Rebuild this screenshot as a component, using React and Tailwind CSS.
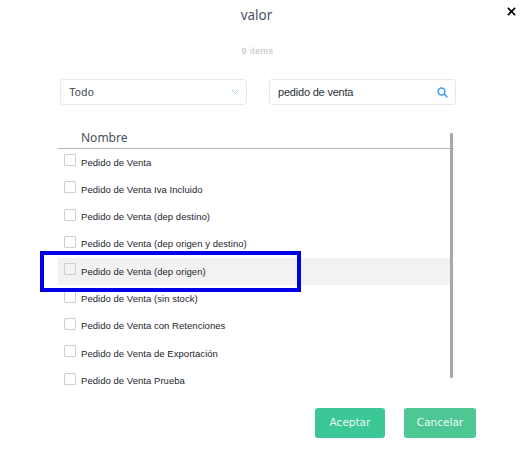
import React from "react";

const rows = [
  "Pedido de Venta",
  "Pedido de Venta Iva Incluido",
  "Pedido de Venta (dep destino)",
  "Pedido de Venta (dep origen y destino)",
  "Pedido de Venta (dep origen)",
  "Pedido de Venta (sin stock)",
  "Pedido de Venta con Retenciones",
  "Pedido de Venta de Exportación",
  "Pedido de Venta Prueba",
];

export default function App() {
  return (
    <div className="relative w-[525px] h-[456px] bg-white overflow-hidden font-['Open_Sans',sans-serif]">
      <button className="absolute right-[8px] top-[5px] w-[12px] h-[12px] flex items-center justify-center text-black">
        <svg width="9" height="9" viewBox="0 0 10 10" fill="none" stroke="currentColor" strokeWidth="1.8">
          <path d="M1 1l8 8M9 1l-8 8" />
        </svg>
      </button>

      <div className="flex flex-col">
        <h1 className="pr-[12px] pt-[6px] h-[31px] text-center text-[13.5px] leading-[18px] text-[#4a5568] font-['Noto_Sans',sans-serif]">valor</h1>
        <p className="pr-[10px] mt-[14px] h-[12px] text-center text-[9px] leading-[12px] text-[#bdbdbd] font-['Liberation_Sans',sans-serif] tracking-[0.4px]">9 items</p>

        <div className="mt-[22px] pl-[60px] flex gap-[22px]">
          <div className="w-[187px] h-[26px] rounded-[3px] border border-[#e6e9ee] pl-[8px] pr-[6px] flex items-center justify-between">
            <span className="text-[11px] text-[#3f4450] font-['Liberation_Sans',sans-serif] tracking-[0.3px]">Todo</span>
            <svg width="9" height="6" viewBox="0 0 9 6" fill="none" stroke="#a9d0f2" strokeWidth="1"><path d="M1 1l3.5 3.5L8 1" /></svg>
          </div>
          <div className="w-[187px] h-[26px] rounded-[3px] border border-[#e6e9ee] pl-[8px] pr-[7px] flex items-center justify-between">
            <span className="text-[11px] text-[#2b2f38] font-['Liberation_Sans',sans-serif] tracking-[-0.2px]">pedido de venta</span>
            <svg width="11" height="11" viewBox="0 0 11 11" fill="none" stroke="#3b9cf0" strokeWidth="1.5"><circle cx="4.5" cy="4.5" r="3.4" /><path d="M7 7l3.3 3.3" /></svg>
          </div>
        </div>

        <div className="relative mt-[24px] ml-[58px] w-[396px]">
          <div className="h-[20px] pl-[23px] border-b border-[#b5b5b5] text-[12px] leading-[18px] text-[#4a4f5a] font-['Noto_Sans',sans-serif]">Nombre</div>
          <ul>
            {rows.map((r, i) => (
              <li key={r} className={`h-[27.3px] w-[392px] flex items-center pl-[6px] gap-[5px] ${i === 4 ? "bg-[#f2f2f2]" : ""}`}>
                <span className={`w-[12px] h-[12px] -mt-[5px] shrink-0 border border-[#cfcfcf] rounded-[1px] ${i === 4 ? "bg-[#f2f2f2]" : "bg-white"}`} />
                <span className="text-[9.5px] text-[#23262d] font-['Liberation_Sans',sans-serif] tracking-[0.04px]">{r}</span>
              </li>
            ))}
          </ul>
          <div className="absolute right-[1px] top-[4px] w-[3px] h-[245px] rounded-[1px] bg-[#a8a8a8]" />
        </div>

        <div className="mt-[13px] pl-[315px] flex gap-[19px]">
          <button className="w-[70px] h-[30px] rounded-[3px] bg-[#3cc796] text-[#eafaf3] text-[10.5px] font-['DejaVu_Sans',sans-serif]">Aceptar</button>
          <button className="w-[72px] h-[30px] rounded-[3px] bg-[#4fc794] text-[#eafaf3] text-[10.5px] font-['DejaVu_Sans',sans-serif]">Cancelar</button>
        </div>
      </div>

      <div className="absolute left-[40px] top-[251px] w-[261px] h-[41px] border-[4px] border-[#0000e6]" />
    </div>
  );
}
